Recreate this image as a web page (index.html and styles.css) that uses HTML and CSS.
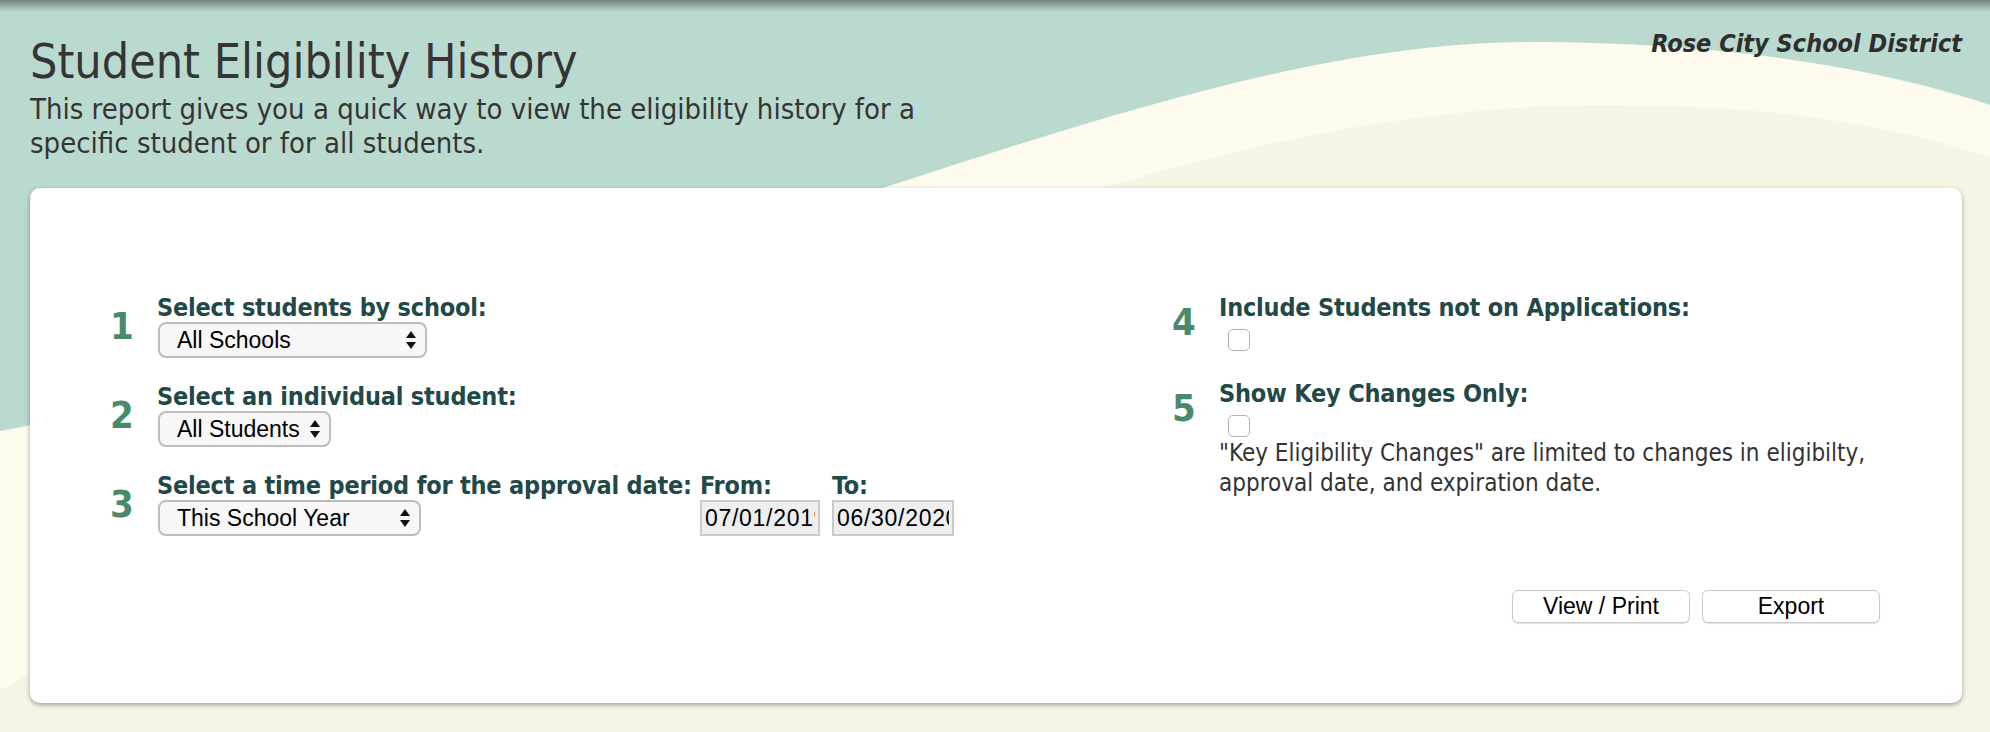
FILE: index.html
```html
<!DOCTYPE html>
<html lang="en">
<head>
<meta charset="utf-8">
<title>Student Eligibility History</title>
<link rel="stylesheet" href="styles.css">
</head>
<body>
<div class="page">
  <svg class="backdrop" viewBox="0 0 1990 732" preserveAspectRatio="none" aria-hidden="true">
    <defs>
      <linearGradient id="topshade" x1="0" y1="0" x2="0" y2="1">
        <stop offset="0" stop-color="#000" stop-opacity=".4"/>
        <stop offset="1" stop-color="#000" stop-opacity="0"/>
      </linearGradient>
    </defs>
    <rect width="1990" height="732" fill="#badacf"/>
    <path d="M0 431 C700 300 1150 42 1530 42 C1750 42 1900 75 1990 105 L1990 732 L0 732 Z" fill="#fefaee"/>
    <path d="M0 690 C500 420 1100 105 1600 105 C1800 105 1900 130 1990 157 L1990 732 L0 732 Z" fill="#f7f4e6"/>
    <rect width="1990" height="12" fill="url(#topshade)"/>
  </svg>

  <header class="header">
    <div class="intro">
      <h1 class="title">Student Eligibility History</h1>
      <p class="subtitle">This report gives you a quick way to view the eligibility history for a specific student or for all students.</p>
    </div>
    <div class="district">Rose City School District</div>
  </header>

  <main class="card">
    <div class="cols">
      <div class="col">
        <div class="row">
          <div class="num">1</div>
          <div class="field">
            <label class="label">Select students by school:</label>
            <div class="select-wrap select-school">
              <select class="select"><option>All Schools</option></select>
              <svg class="arrows" width="10" height="18" viewBox="0 0 10 18"><polygon points="0,7 5,0 10,7"/><polygon points="0,11 10,11 5,18"/></svg>
            </div>
          </div>
        </div>
        <div class="row">
          <div class="num">2</div>
          <div class="field">
            <label class="label">Select an individual student:</label>
            <div class="select-wrap select-student">
              <select class="select"><option>All Students</option></select>
              <svg class="arrows" width="10" height="18" viewBox="0 0 10 18"><polygon points="0,7 5,0 10,7"/><polygon points="0,11 10,11 5,18"/></svg>
            </div>
          </div>
        </div>
        <div class="row">
          <div class="num">3</div>
          <div class="field field-period">
            <label class="label">Select a time period for the approval date:</label>
            <div class="select-wrap select-period">
              <select class="select"><option>This School Year</option></select>
              <svg class="arrows" width="10" height="18" viewBox="0 0 10 18"><polygon points="0,7 5,0 10,7"/><polygon points="0,11 10,11 5,18"/></svg>
            </div>
          </div>
          <div class="field field-from">
            <label class="label">From:</label>
            <input class="date" type="text" value="07/01/2019" readonly>
          </div>
          <div class="field field-to">
            <label class="label">To:</label>
            <input class="date" type="text" value="06/30/2020" readonly>
          </div>
        </div>
      </div>

      <div class="col">
        <div class="row row-check">
          <div class="num">4</div>
          <div class="field">
            <label class="label">Include Students not on Applications:</label>
            <input class="check" type="checkbox">
          </div>
        </div>
        <div class="row row-check row-last">
          <div class="num">5</div>
          <div class="field">
            <label class="label">Show Key Changes Only:</label>
            <input class="check" type="checkbox">
          </div>
        </div>
        <p class="note">"Key Eligibility Changes" are limited to changes in eligibilty, approval date, and expiration date.</p>
      </div>
    </div>

    <div class="actions">
      <button class="btn" type="button">View / Print</button>
      <button class="btn" type="button">Export</button>
    </div>
  </main>
</div>
</body>
</html>
```

FILE: styles.css
```css
html, body {
  margin: 0;
  padding: 0;
}

body {
  width: 1990px;
  height: 732px;
  overflow: hidden;
  background: #fefaee;
  font-family: "DejaVu Sans Condensed", "DejaVu Sans", sans-serif;
  font-stretch: condensed;
}

.page {
  position: relative;
  height: 732px;
  padding: 0 28px 0 30px;
  box-sizing: border-box;
}

.backdrop {
  position: absolute;
  left: 0;
  top: 0;
  width: 100%;
  height: 100%;
  z-index: 0;
}

.header,
.card {
  position: relative;
  z-index: 1;
}

.header {
  display: flex;
  justify-content: space-between;
  align-items: flex-start;
  height: 188px;
  padding-top: 28px;
  box-sizing: border-box;
}

.intro {
  margin-top: 5px;
}

.title {
  margin: 0;
  font-size: 48px;
  font-weight: normal;
  line-height: 56px;
  color: #353535;
}

.subtitle {
  margin: 3px 0 0;
  max-width: 960px;
  font-size: 29px;
  line-height: 34px;
  color: #353535;
}

.district {
  margin-top: 1px;
  font-size: 25px;
  font-weight: bold;
  font-style: italic;
  line-height: 29px;
  color: #2e2e2e;
}

.card {
  height: 515px;
  box-sizing: border-box;
  padding: 105px 0 0 80px;
  background: #fff;
  border-radius: 10px;
  box-shadow: 0 2px 5px rgba(0, 0, 0, 0.35);
}

.cols {
  display: grid;
  grid-template-columns: 1062px 1fr;
}

.row {
  display: flex;
  align-items: center;
  margin-bottom: 24px;
}

.row-check {
  margin-bottom: 28px;
}

.row-last {
  margin-bottom: 1px;
}

.num {
  flex: none;
  width: 47px;
  font-size: 38px;
  font-weight: bold;
  line-height: 44px;
  color: #4a8a6b;
}

.field {
  display: flex;
  flex-direction: column;
  align-items: flex-start;
}

.field-period {
  width: 543px;
  flex: none;
}

.field-from {
  width: 132px;
  flex: none;
}

.field-to {
  width: 122px;
  flex: none;
}

.label {
  display: block;
  font-size: 25px;
  font-weight: bold;
  line-height: 29px;
  letter-spacing: -0.2px;
  color: #234848;
  white-space: nowrap;
}

.select-wrap {
  position: relative;
  margin-left: 1px;
}

.select-school {
  width: 269px;
}

.select-student {
  width: 173px;
}

.select-period {
  width: 263px;
}

.select {
  -webkit-appearance: none;
  appearance: none;
  display: block;
  width: 100%;
  height: 36px;
  margin: 0;
  padding: 0 0 0 17px;
  box-sizing: border-box;
  border: 2px solid #bdbdbd;
  border-radius: 8px;
  background: #f7f7f7;
  font-family: "Liberation Sans", Arial, sans-serif;
  font-size: 23px;
  color: #000;
  outline: none;
}

.arrows {
  position: absolute;
  right: 11px;
  top: 9px;
  fill: #111;
  pointer-events: none;
}

.date {
  display: block;
  width: 120px;
  height: 36px;
  margin: 0;
  padding: 0 3px;
  box-sizing: border-box;
  border: 2px solid #c9c9c9;
  border-radius: 0;
  background: #eeeeee;
  font-family: "Liberation Sans", Arial, sans-serif;
  font-size: 23px;
  letter-spacing: 0.7px;
  color: #000;
  outline: none;
}

.field-to .date {
  width: 122px;
}

.check {
  -webkit-appearance: none;
  appearance: none;
  display: block;
  width: 22px;
  height: 22px;
  margin: 7px 0 0 9px;
  box-sizing: border-box;
  border: 1.5px solid #b3b3b3;
  border-radius: 5px;
  background: #fff;
}

.note {
  margin: 0 0 0 47px;
  max-width: 680px;
  font-size: 24px;
  line-height: 30px;
  color: #333;
}

.actions {
  display: flex;
  justify-content: flex-end;
  gap: 12px;
  margin-top: 30px;
  padding-right: 82px;
}

.btn {
  width: 178px;
  height: 33px;
  margin: 0;
  padding: 0;
  border: 1px solid #c9c9c9;
  border-radius: 6px;
  background: #fff;
  box-shadow: 0 1px 1px rgba(0, 0, 0, 0.12);
  font-family: "Liberation Sans", Arial, sans-serif;
  font-size: 23px;
  color: #000;
}
```
